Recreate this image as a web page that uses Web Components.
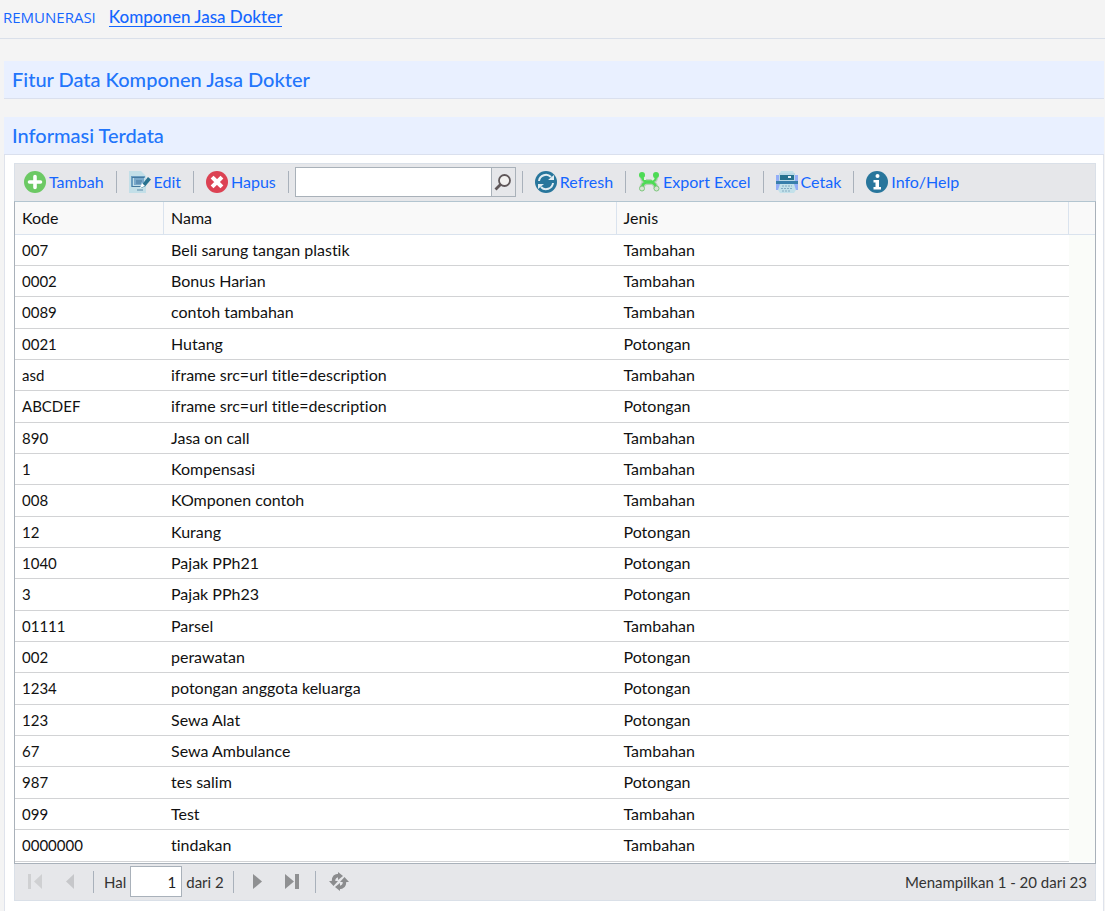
<!DOCTYPE html>
<html lang="id">
<head>
<meta charset="utf-8">
<title>Komponen Jasa Dokter</title>
<style>
  html, body { margin: 0; background: #f4f4f4; }
  body { font: 16px/20px Lato, "Liberation Sans", sans-serif; font-variant-ligatures: none; color: #111; --link: #1466ff; }
</style>
</head>
<body>
<remun-page></remun-page>

<script>
const define = (name, html, setup) => {
  const tpl = document.createElement('template');
  tpl.innerHTML = html;
  customElements.define(name, class extends HTMLElement {
    connectedCallback() {
      if (this.shadowRoot) return;
      const content = tpl.content.cloneNode(true);
      if (setup) setup(content, this);
      this.attachShadow({ mode: 'open' }).append(content);
    }
  });
};

const ICONS = {
  add: '<circle cx="11" cy="11" r="11" fill="#6cc964"/><path d="M11 5.5v11M5.5 11h11" stroke="#fff" stroke-width="3.6" stroke-linecap="round"/>',
  edit: '<path d="M0 0h12l5 5v17H0z" fill="#c3dfe8"/><path d="M2 5h14v2H4v9H2z" fill="#6a9dc0"/><path d="M5 7h10v7H5z" fill="#7aa9cb"/><path d="M3 6.500h12M7 10h6M7 12h5M3 15.500h10" stroke="#44799f" stroke-width="1"/><path d="M19 6l3 2.500-6 7-4 1.500 1.500-4z" fill="#27718f"/><path d="M13 12l3 3-5 2z" fill="#fff"/><path d="M8 18h6v2H8z" fill="#8db4c9"/>',
  del: '<circle cx="11" cy="11" r="11" fill="#dc4253"/><path d="M7.500 7.500l7 7M14.500 7.500l-7 7" stroke="#fff" stroke-width="4" stroke-linecap="square"/>',
  refresh: '<circle cx="11" cy="11" r="11" fill="#28769c"/><path d="M4 10a7 7 0 0 1 12-4M18 12a7 7 0 0 1-12 4" fill="none" stroke="#e1edf2" stroke-width="2"/><path d="M13 9h6V4zM9 13H3v5z" fill="#e1edf2"/>',
  excel: '<path d="M4 4c0 5 2 6 4 6.500h6c3-1 4-2 4-6.500M4 18c0-4 2-6 4-6.500h6c3 1 4 3 4 6.500" fill="none" stroke="#b9cdb9" stroke-width="5"/><path d="M4 4c0 5 2 6 4 6.500h6c3-1 4-2 4-6.500M4 18c0-4 2-6 4-6.500h6c3 1 4 3 4 6.500" fill="none" stroke="#4ddb55" stroke-width="2.500"/><path d="M7 6v3M16 7l-2 2" stroke="#e6f2e4" stroke-width="2"/><g fill="#4ddb55"><circle cx="4" cy="4" r="3"/><circle cx="18" cy="4" r="3"/></g><g fill="#d6e4d3" stroke="#7cc77c"><circle cx="4" cy="17.500" r="2.500"/><circle cx="18.500" cy="17.500" r="2.500"/></g>',
  print: '<path d="M5 0h12l2 4H3z" fill="#c3e1ea"/><path d="M0 4h22v15H0z" fill="#93aef8"/><path d="M3 2h16v8H3z" fill="#bad9e6"/><path d="M4 4h14v5H4z" fill="#26728f"/><path d="M12 5h3v2h-3z" fill="#e3f1f7"/><path d="M0 10h22v3H0z" fill="#387fab"/><path d="M4 13h14l2 6-2 3H4l-2-3z" fill="#c3e1ea"/><path d="M6 15h10M5 17.500h12M6 20h9" stroke="#84abc1" stroke-dasharray="2 1"/>',
  info: '<circle cx="11" cy="11" r="11" fill="#28769c"/><circle cx="11.500" cy="5" r="2" fill="#fff"/><path d="M7.500 9h5.500v7h2v2.500H7.500V16h2v-4.500h-2z" fill="#fff"/>',
  search: '<circle cx="12.500" cy="9.500" r="5.500" fill="#f2f1f0" stroke="#5f5759" stroke-width="1.800"/><path d="M8.500 13.500L3.500 18.500" stroke="#5f5759" stroke-width="2.800"/>',
  first: '<path d="M4 3h3v15H4z" fill="#cfd0d2"/><path d="M18 3v15l-8-7.500z" fill="#cfd0d2"/>',
  prev: '<path d="M15 3v15l-8-7.500z" fill="#c6c7ca"/>',
  next: '<path d="M7 3v15l9-7.500z" fill="#8f9092"/>',
  last: '<path d="M4 3v15l9-7.500z" fill="#8f9092"/><path d="M14 3h4v15h-4z" fill="#8f9092"/>',
  reload: '<path d="M5.500 10c0-4 2-5.500 5.500-5.500M16.500 11c0 4-2 5.500-5.500 5.500" fill="none" stroke="#8b8c8e" stroke-width="3.500"/><path d="M10 1v8l5-4zM12 20v-8l-5 4zM1 10h9l-4.500 5zM21 11h-9l4.500-5z" fill="#8b8c8e"/>'
};

define('ui-icon', `
  <style>
    :host { display: block; flex: none; width: 22px; height: 22px; }
    svg { display: block; }
  </style>
  <svg width="22" height="22" viewBox="0 0 22 22" aria-hidden="true"></svg>`,
  (root, el) => { root.querySelector('svg').innerHTML = ICONS[el.getAttribute('name')]; });

define('tool-separator', `
  <style>:host { display: block; flex: none; width: 1px; height: 22px; background: #a9b1bb; }</style>`);

define('tool-button', `
  <style>
    :host { display: block; flex: none; }
    button { display: flex; align-items: center; gap: 3px; margin: 0; padding: 0; border: 0;
      background: none; color: var(--link); font: inherit; font-variant-ligatures: none; white-space: nowrap; cursor: pointer; }
    button:disabled { cursor: default; }
  </style>
  <button type="button"><ui-icon></ui-icon><slot></slot></button>`,
  (root, el) => {
    root.querySelector('ui-icon').setAttribute('name', el.getAttribute('icon'));
    const button = root.querySelector('button');
    button.disabled = el.hasAttribute('disabled');
    if (el.hasAttribute('label')) {
      button.setAttribute('aria-label', el.getAttribute('label'));
      button.style.gap = '0';
    }
  });

define('search-box', `
  <style>
    :host { display: block; flex: none; }
    form { display: flex; box-sizing: border-box; width: 221px; height: 30px; border: 1px solid #a9b1b9; }
    input { flex: 1; min-width: 0; margin: 0; padding: 0 6px; border: 0; background: #fff; font: inherit; outline: 0; }
    button { display: flex; align-items: center; box-sizing: border-box; width: 24px; padding: 0; border: 0; border-left: 1px solid #a9b1b9; background: #e6e7ea; }
  </style>
  <form role="search">
    <input type="text" aria-label="Cari komponen">
    <button type="button" aria-label="Cari"><ui-icon name="search"></ui-icon></button>
  </form>`);

define('top-nav', `
  <style>
    :host { display: block; border-bottom: 1px solid #dae0ea; }
    nav { display: flex; align-items: flex-start; gap: 13px; height: 30px; padding: 8px 3px 0; }
    a { color: var(--link); text-decoration: none; }
    .root { font: 400 15px/18px "Open Sans", sans-serif; }
    .here { font-size: 17px; line-height: 18px; font-weight: 500; border-bottom: 1px solid var(--link); }
  </style>
  <nav><a class="root" href="#remunerasi">REMUNERASI</a><a class="here" href="#komponen">Komponen Jasa Dokter</a></nav>`);

define('info-panel', `
  <style>
    :host { display: flex; flex-direction: column; }
    h2 { margin: 0; padding: 0 8px; height: 37px; border-bottom: 1px solid #dae0ee; background: #e9f0ff;
      color: #2275fb; font-size: 20px; line-height: 36px; font-weight: 500; }
    .body { flex: 1; background: #fff; border: 1px solid #dfe3ec; border-width: 0 1px; padding: 8px 7px 8px 9px; }
    :host([collapsed]) .body { display: none; }
  </style>
  <h2><slot name="title"></slot></h2>
  <div class="body"><slot></slot></div>`);

define('grid-toolbar', `
  <style>
    :host { display: flex; align-items: center; box-sizing: border-box; height: 38px; padding: 0 9px 1px;
      border: 1px solid #dae0e8; border-bottom: 0; background: #e6e7ea; }
    tool-separator { margin: 0 12px; }
    search-box { margin: 0 -6px; }
  </style>
  <tool-button icon="add">Tambah</tool-button><tool-separator></tool-separator>
  <tool-button icon="edit">Edit</tool-button><tool-separator></tool-separator>
  <tool-button icon="del">Hapus</tool-button><tool-separator></tool-separator>
  <search-box></search-box><tool-separator></tool-separator>
  <tool-button icon="refresh">Refresh</tool-button><tool-separator></tool-separator>
  <tool-button icon="excel">Export Excel</tool-button><tool-separator></tool-separator>
  <tool-button icon="print">Cetak</tool-button><tool-separator></tool-separator>
  <tool-button icon="info">Info/Help</tool-button>`);

const ROWS = [
  ['007', 'Beli sarung tangan plastik', 'Tambahan'],
  ['0002', 'Bonus Harian', 'Tambahan'],
  ['0089', 'contoh tambahan', 'Tambahan'],
  ['0021', 'Hutang', 'Potongan'],
  ['asd', 'iframe src=url title=description', 'Tambahan'],
  ['ABCDEF', 'iframe src=url title=description', 'Potongan'],
  ['890', 'Jasa on call', 'Tambahan'],
  ['1', 'Kompensasi', 'Tambahan'],
  ['008', 'KOmponen contoh', 'Tambahan'],
  ['12', 'Kurang', 'Potongan'],
  ['1040', 'Pajak PPh21', 'Potongan'],
  ['3', 'Pajak PPh23', 'Potongan'],
  ['01111', 'Parsel', 'Tambahan'],
  ['002', 'perawatan', 'Potongan'],
  ['1234', 'potongan anggota keluarga', 'Potongan'],
  ['123', 'Sewa Alat', 'Potongan'],
  ['67', 'Sewa Ambulance', 'Tambahan'],
  ['987', 'tes salim', 'Potongan'],
  ['099', 'Test', 'Tambahan'],
  ['0000000', 'tindakan', 'Tambahan']
];

define('data-grid', `
  <style>
    :host { display: block; border: 1px solid #a9b1ba; border-top-color: #b3c5d0; padding-bottom: 1px; background: #fff; }
    table { width: 100%; table-layout: fixed; border-collapse: separate; border-spacing: 0; }
    th, td { box-sizing: border-box; height: 31px; padding: 0 7px 1px; text-align: left; font-weight: 400; line-height: 20px; white-space: nowrap; }
    th { height: 33px; background: #f9f9f9; border-right: 1px solid #dae3ee; border-bottom: 1px solid #dae3ee; }
    th:last-child { border-right: 0; }
    td { border-bottom: 1px solid #d2d3d5; }
    td:first-child { font-size: 15px; }
    td:last-child { border-bottom: 0; background: #fafcf9; }
    tr:nth-child(3n) td, tr:last-child td { height: 32px; }
    .code { width: 149px; }
    .edge { width: 26px; }
  </style>
  <table>
    <colgroup><col class="code"><col><col><col class="edge"></colgroup>
    <thead><tr><th scope="col">Kode</th><th scope="col">Nama</th><th scope="col">Jenis</th><th></th></tr></thead>
    <tbody></tbody>
  </table>`,
  root => {
    const body = root.querySelector('tbody');
    for (const row of ROWS) {
      const tr = body.insertRow();
      for (const value of [...row, '']) tr.insertCell().textContent = value;
    }
  });

define('grid-pager', `
  <style>
    :host { display: flex; align-items: center; justify-content: space-between; box-sizing: border-box; height: 37px;
      padding: 0 8px 1px 9px; border: 1px solid #dae0e8; border-top: 0; background: #e6e7ea; color: #333; font-size: 15px; }
    .pages { display: flex; align-items: center; }
    .move { display: flex; gap: 13px; }
    tool-separator { margin: 0 12px; }
    label { display: flex; align-items: center; gap: 4px; margin-left: -2px; }
    .count { margin-right: -3px; }
    input { box-sizing: border-box; width: 52px; height: 31px; margin: 0 4px 0 0; padding: 0 5px; border: 1px solid #a9b1ba;
      background: #fff; color: #222; font: inherit; text-align: right; }
  </style>
  <div class="pages">
    <div class="move">
      <tool-button icon="first" label="Halaman pertama" disabled></tool-button>
      <tool-button icon="prev" label="Halaman sebelumnya" disabled></tool-button>
    </div>
    <tool-separator></tool-separator>
    <label>Hal <input type="text" value="1"></label><span class="count">dari 2</span>
    <tool-separator></tool-separator>
    <div class="move">
      <tool-button icon="next" label="Halaman berikutnya"></tool-button>
      <tool-button icon="last" label="Halaman terakhir"></tool-button>
    </div>
    <tool-separator></tool-separator>
    <tool-button icon="reload" label="Muat ulang"></tool-button>
  </div>
  <span>Menampilkan 1 - 20 dari 23</span>`);

define('remun-page', `
  <style>
    :host { display: flex; flex-direction: column; min-height: 100vh; }
    main { display: flex; flex-direction: column; flex: 1; gap: 18px; padding: 22px 1px 0 4px; }
    .fill { flex: 1; }
  </style>
  <top-nav></top-nav>
  <main>
    <info-panel collapsed><span slot="title">Fitur Data Komponen Jasa Dokter</span></info-panel>
    <info-panel class="fill">
      <span slot="title">Informasi Terdata</span>
      <grid-toolbar></grid-toolbar>
      <data-grid></data-grid>
      <grid-pager></grid-pager>
    </info-panel>
  </main>`);
</script>
</body>
</html>
